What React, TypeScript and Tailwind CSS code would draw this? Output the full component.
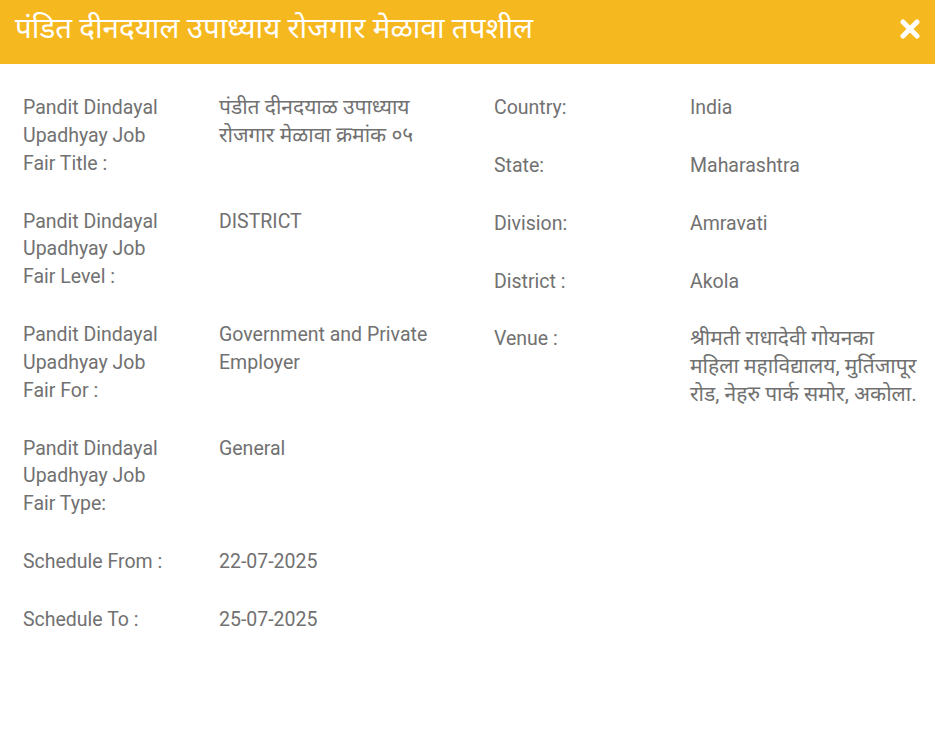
import React from "react";

const font = { fontFamily: 'Roboto, "Noto Sans", "Noto Sans Devanagari", "DejaVu Sans", sans-serif' };

type Row = { label: string; value: string | string[]; deva?: boolean };

const left: Row[] = [
  { label: "Pandit Dindayal Upadhyay Job Fair Title :", value: "पंडीत दीनदयाळ उपाध्याय रोजगार मेळावा क्रमांक ०५", deva: true },
  { label: "Pandit Dindayal Upadhyay Job Fair Level :", value: "DISTRICT" },
  { label: "Pandit Dindayal Upadhyay Job Fair For :", value: "Government and Private Employer" },
  { label: "Pandit Dindayal Upadhyay Job Fair Type:", value: "General" },
  { label: "Schedule From :", value: "22-07-2025" },
  { label: "Schedule To :", value: "25-07-2025" },
];

const right: Row[] = [
  { label: "Country:", value: "India" },
  { label: "State:", value: "Maharashtra" },
  { label: "Division:", value: "Amravati" },
  { label: "District :", value: "Akola" },
  {
    label: "Venue :",
    value: ["श्रीमती राधादेवी गोयनका", "महिला महाविद्यालय, मुर्तिजापूर", "रोड, नेहरु पार्क समोर, अकोला."],
    deva: true,
  },
];

function Rows({ rows, valueWidth }: { rows: Row[]; valueWidth: string }) {
  return (
    <div className="flex flex-col gap-[30px]">
      {rows.map((r) => (
        <div key={r.label} className="flex">
          <div className="w-[196px] shrink-0 pr-[46px]">{r.label}</div>
          <div className={valueWidth + (r.deva ? " text-[21px] leading-[27.85px]" : "")}>
            {Array.isArray(r.value)
              ? r.value.map((l) => (
                  <span key={l} className="block whitespace-nowrap">
                    {l}
                  </span>
                ))
              : r.value}
          </div>
        </div>
      ))}
    </div>
  );
}

export default function App() {
  return (
    <div className="w-[935px] h-[730px] bg-white overflow-hidden" style={font}>
      <div className="h-[64px] bg-[#f6b81f] flex items-center justify-between pl-[15px] pr-[14px]">
        <h1 className="text-white text-[29.5px] leading-none font-normal pb-[6px]">
          पंडित दीनदयाल उपाध्याय रोजगार मेळावा तपशील
        </h1>
        <svg width="22" height="20" viewBox="0 0 22 20" className="mb-[6px]">
          <path d="M4 3 L18 17 M18 3 L4 17" stroke="#ffffff" strokeWidth="5" strokeLinecap="round" />
        </svg>
      </div>
      <div className="grid grid-cols-[471px_1fr] pl-[23px] pt-[30px] text-[19.5px] leading-[27.85px] text-[#717171]">
        <Rows rows={left} valueWidth="w-[245px]" />
        <Rows rows={right} valueWidth="w-[240px]" />
      </div>
    </div>
  );
}
